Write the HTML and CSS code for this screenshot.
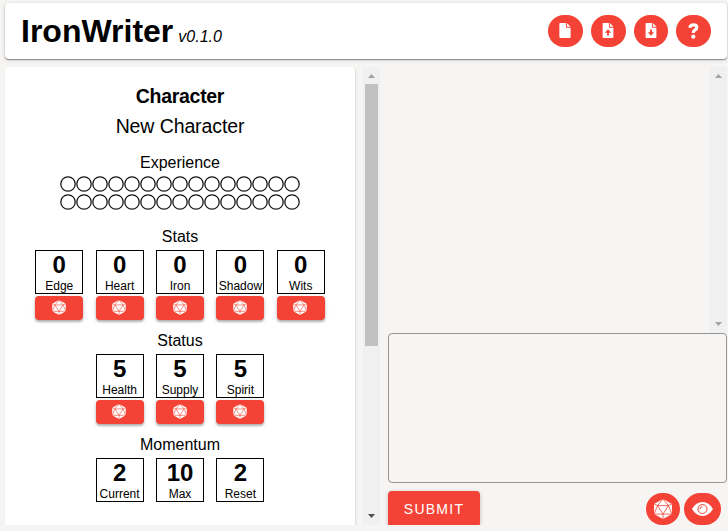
FILE: index.html
```html
<!DOCTYPE html>
<html lang="en">
<head>
<meta charset="utf-8">
<title>IronWriter</title>
<link rel="stylesheet" href="styles.css">
</head>
<body>
<svg class="defs" aria-hidden="true">
  <symbol id="die" viewBox="0 0 18 20">
    <path fill="#fff" d="M9 0 18 5V15L9 20 0 15V5Z"/>
    <path fill="none" stroke="#f44336" stroke-width=".8" d="M9 20V15.2M9 15.2 3.6 6.6H14.4ZM0 15 9 15.2 18 15M0 15 3.6 6.6 0 5M18 15 14.4 6.6 18 5M3.6 6.6 9 0 14.4 6.6"/>
  </symbol>
  <symbol id="file" viewBox="0 0 12 16">
    <path fill="#fff" d="M0 1Q0 0 1 0H7V5H12V15Q12 16 11 16H1Q0 16 0 15ZM8 0 12 4H8Z"/>
  </symbol>
  <pattern id="pip" width="16" height="18" patternUnits="userSpaceOnUse">
    <circle cx="8" cy="8" r="7.2" fill="none" stroke="#111" stroke-width="1.25"/>
  </pattern>
</svg>
<header class="header">
  <h1 class="title">IronWriter</h1>
  <span class="version">v0.1.0</span>
  <nav class="actions">
    <button class="round"><svg class="file"><use href="#file"/></svg></button>
    <button class="round"><svg class="file" viewBox="0 0 12 16"><use href="#file"/><path class="arrow" d="M6 6.7 9.3 10.4H7V13.3H5V10.4H2.7Z"/></svg></button>
    <button class="round narrow"><svg class="file" viewBox="0 0 12 16"><use href="#file"/><path class="arrow" d="M6 13.5 9.3 9.9H7V7H5V9.9H2.7Z"/></svg></button>
    <button class="round"><svg class="question" viewBox="0 0 11 16"><path d="M1.6 4.8Q2.6 1.8 5.4 1.8 8.8 1.8 8.8 4.4 8.8 6 6.9 7 5.3 7.8 5.3 10" fill="none" stroke="#fff" stroke-width="3.2"/><circle cx="5.3" cy="13.7" r="2.1" fill="#fff"/></svg></button>
  </nav>
</header>
<main class="main">
  <section class="sheet">
    <h2 class="heading">Character</h2>
    <p class="name">New Character</p>
    <h3 class="label">Experience</h3>
    <svg class="track" width="240" height="36"><rect width="240" height="36" fill="url(#pip)"/></svg>
    <h3 class="label">Stats</h3>
    <div class="row">
      <div class="stat"><div class="box"><b>0</b><span>Edge</span></div><button class="roll"><svg><use href="#die"/></svg></button></div>
      <div class="stat"><div class="box"><b>0</b><span>Heart</span></div><button class="roll"><svg><use href="#die"/></svg></button></div>
      <div class="stat"><div class="box"><b>0</b><span>Iron</span></div><button class="roll"><svg><use href="#die"/></svg></button></div>
      <div class="stat"><div class="box"><b>0</b><span>Shadow</span></div><button class="roll"><svg><use href="#die"/></svg></button></div>
      <div class="stat"><div class="box"><b>0</b><span>Wits</span></div><button class="roll"><svg><use href="#die"/></svg></button></div>
    </div>
    <h3 class="label">Status</h3>
    <div class="row">
      <div class="stat"><div class="box"><b>5</b><span>Health</span></div><button class="roll"><svg><use href="#die"/></svg></button></div>
      <div class="stat"><div class="box"><b>5</b><span>Supply</span></div><button class="roll"><svg><use href="#die"/></svg></button></div>
      <div class="stat"><div class="box"><b>5</b><span>Spirit</span></div><button class="roll"><svg><use href="#die"/></svg></button></div>
    </div>
    <h3 class="label">Momentum</h3>
    <div class="row">
      <div class="stat"><div class="box"><b>2</b><span>Current</span></div></div>
      <div class="stat"><div class="box"><b>10</b><span>Max</span></div></div>
      <div class="stat"><div class="box"><b>2</b><span>Reset</span></div></div>
    </div>
  </section>
  <div class="scrollbar sheet-scroll">
    <svg class="tip" viewBox="0 0 7 4"><path fill="#a3a3a3" d="M0 4 3.5 0 7 4Z"/></svg>
    <div class="thumb"></div>
    <svg class="tip end" viewBox="0 0 7 4"><path fill="#505050" d="M0 0 3.5 4 7 0Z"/></svg>
  </div>
  <section class="journal">
    <div class="log">
      <div class="scrollbar">
        <svg class="tip" viewBox="0 0 7 4"><path fill="#a3a3a3" d="M0 4 3.5 0 7 4Z"/></svg>
        <svg class="tip end" viewBox="0 0 7 4"><path fill="#a3a3a3" d="M0 0 3.5 4 7 0Z"/></svg>
      </div>
    </div>
    <textarea class="entry"></textarea>
    <div class="controls">
      <button class="submit">SUBMIT</button>
      <button class="round roll-any"><svg class="big-die"><use href="#die"/></svg></button>
      <button class="round wide"><svg class="eye" viewBox="0 0 21 14"><path fill="#fff" d="M0 7Q4 0 10.5 0T21 7Q17 14 10.5 14T0 7Z"/><circle cx="10.5" cy="7" r="4.5" fill="none" stroke="#f44336"/><path d="M8 7Q8.2 4.8 10.4 4.6" fill="none" stroke="#f44336"/></svg></button>
    </div>
  </section>
</main>
</body>
</html>
```
FILE: styles.css
```css
* { box-sizing: border-box; }
body {
  margin: 0;
  padding: 3px 1px 6px 5px;
  height: 531px;
  overflow: hidden;
  background: #f6f5f4;
  color: #000;
  font-family: "Liberation Sans", Arial, sans-serif;
}
button { border: 0; padding: 0; font: inherit; color: #fff; background: #f44336; }
svg { display: block; }
.defs { position: absolute; width: 0; height: 0; }

.header {
  display: flex;
  align-items: baseline;
  height: 56px;
  padding: 0 16px;
  background: #fff;
  border-radius: 4px;
  box-shadow: 0 1px 1px #8a8a8a, 0 1px 4px rgba(0,0,0,.16);
}
.title { margin: 0; font-size: 32px; line-height: 57px; }
.version { margin-left: 5px; font-size: 16px; font-style: italic; }
.actions { display: flex; gap: 8px; margin-left: auto; align-self: center; }
.round {
  display: flex;
  align-items: center;
  justify-content: center;
  width: 35px;
  height: 32px;
  border-radius: 17px;
}
.narrow { width: 34px; }
.file { width: 12px; height: 15px; }
.actions .round { padding-right: 1px; padding-bottom: 1px; }
.arrow { fill: #f44336; }
.question { width: 11px; height: 16px; }

.main { display: flex; height: 458px; margin-top: 8px; overflow: hidden; }
.sheet {
  width: 350px;
  background: #fff;
  border-radius: 4px 4px 0 0;
  box-shadow: 0 1px 3px rgba(0,0,0,.22);
  text-align: center;
}
.heading { margin: 18px 0 0; font-size: 19.5px; line-height: 23px; letter-spacing: -.3px; }
.name { margin: 7px 0 0; font-size: 19.5px; line-height: 23px; letter-spacing: -.1px; }
.label { margin: 16px 0 0; font-size: 16px; font-weight: 400; line-height: 18px; }
.track { margin: 4px auto 0; }
.track + .label { margin-top: 16px; }
.row { display: flex; justify-content: center; gap: 12.4px; margin-top: 4px; }
.row + .label { margin-top: 12px; }
.stat { width: 48px; }
.box { height: 44px; border: 1px solid #000; overflow: hidden; }
.box b { display: block; height: 28px; font-size: 24px; line-height: 28px; }
.box span { display: block; margin: 0 -2px; font-size: 12px; line-height: 15px; }
.roll {
  display: flex;
  align-items: center;
  justify-content: center;
  width: 48px;
  height: 24px;
  margin-top: 2px;
  padding: 0 1px 1px 0;
  border-radius: 4px;
  box-shadow: 0 2px 2px rgba(0,0,0,.22), 0 1px 4px rgba(0,0,0,.16);
}
.roll svg { width: 14px; height: 15px; }

.scrollbar {
  display: flex;
  flex-direction: column;
  align-items: center;
  width: 17px;
  height: 100%;
  padding: 7px 0;
  background: #f0f0f0;
}
.sheet-scroll { margin: 0 8px; }
.tip { width: 7px; height: 4px; flex: none; }
.end { margin-top: auto; }
.thumb { width: 13px; height: 262px; margin-top: 6px; background: #c1c1c1; }
.journal { width: 339px; }
.log { display: flex; justify-content: flex-end; height: 266px; }
.entry {
  display: block;
  width: 339px;
  height: 150px;
  border: 1px solid #949494;
  border-radius: 4px;
  background: transparent;
  resize: none;
}
.controls { display: flex; align-items: flex-start; padding-top: 8px; }
.submit {
  width: 92px;
  height: 36px;
  border-radius: 4px;
  font-size: 14px;
  letter-spacing: 1.25px;
  box-shadow: 0 1px 4px rgba(0,0,0,.22);
}
.roll-any { width: 34px; margin: 2px 4px 0 auto; }
.wide { width: 37px; margin: 2px 6px 0 0; }
.big-die { width: 18px; height: 20px; }
.eye { width: 21px; height: 14px; }
```
